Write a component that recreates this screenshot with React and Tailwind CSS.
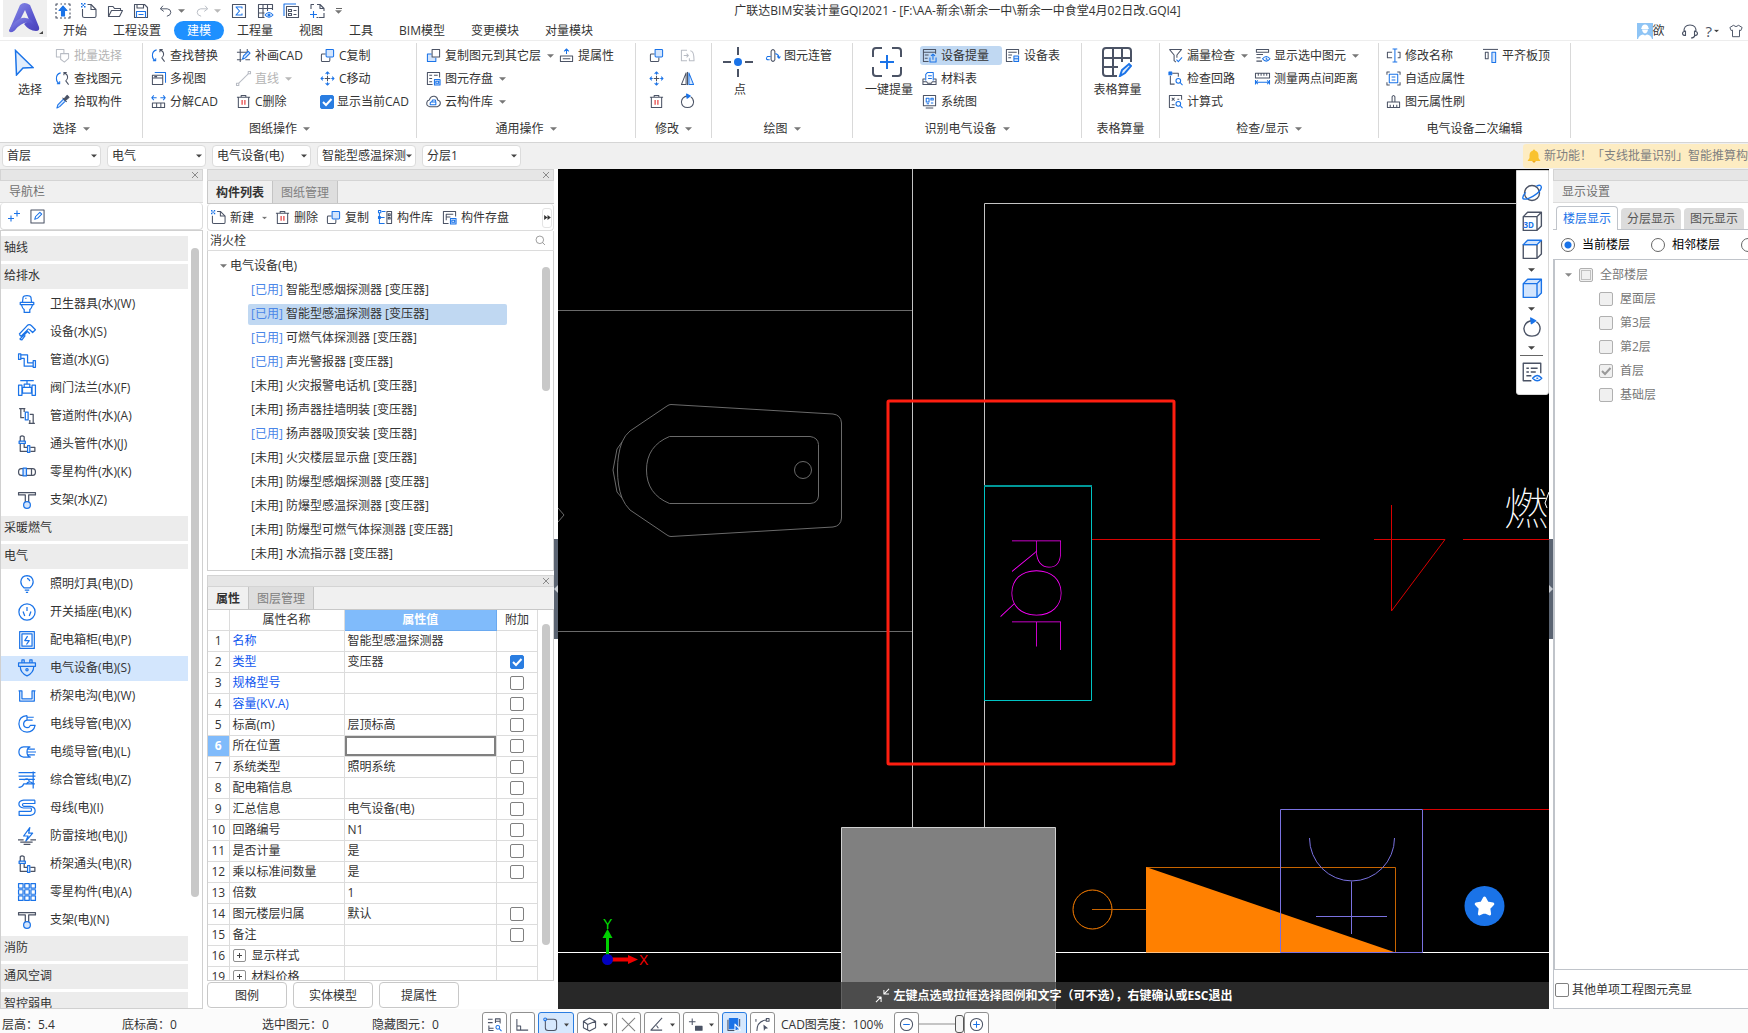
import React from "react";

const COLORS = {
  d: "#4b5365",
  b: "#1a73e8",
  r: "#e02020",
  g: "#b8bcc4",
  k: "#808080",
  n: "none",
  w: "#ffffff",
  l: "#d3e5fd",
};

// Each entry is a list of [path, stroke, fill].
const ICONS = {
  upload: [["M1 3V1H3M5.500 1H7M9 1h2M13 1h2v2M15 5.500v2M15 9.500v2M15 13v2h-2M11 15H9M7 15H5M3 15H1v-2M1 11V9M1 7V5", "d"], ["M8 3l4 4.500H9.500V13h-3V7.500H4z", "b", "b"]],
  newdoc: [["M6.500 1.500H10l5 5V13q0 1.500-1.500 1.500h-10Q1.500 14.500 1.500 13V6", "d"], ["M10 1.500V6.500h5", "d"], ["M0 0h1.500v1.500H0zM3 0h1.500v1.500H3zM1.500 1.500H3V3H1.500zM0 3h1.500v1.500H0zM3 3h1.500v1.500H3z", "n", "b"]],
  open: [["M1.500 13.500v-10h4.500l1.500 2h6v2", "d"], ["M1.500 13.500l3-6h11l-3 6z", "d"]],
  save: [["M1.500 1.500h10l3 3v10h-13z", "d"], ["M4 1.500v3.500h6.500V1.500", "d"], ["M3.500 14.500v-6h9v6M5.500 11.500h5", "b"]],
  undo: [["M4.500 2L1.500 5.500l4 3M2 5.500h7.500q4 .500 4 4t-4.500 4.500", "d"]],
  redo: [["M11.500 2l3 3.500-4 3M14 5.500H6.500q-4 .500-4 4t4.500 4.500", "g"]],
  sigma: [["M1.500 1.500h13v13h-13z", "d"], ["M11 5.500V4H5l3.500 4L5 12h6v-1.500", "b"]],
  tableeye: [["M15.500 7V1.500h-14v13h6M1.500 5.500h14M1.500 10h6M6 1.500v13M10.500 1.500V8", "d"], ["M8 12q4-5 8 0q-4 4.500-8 0z", "b"], ["M11 12a1 1 0 1 0 2 0a1 1 0 1 0-2 0", "b", "b"]],
  stack: [["M3.500 3.500h12v11h-12z", "d"], ["M13 1H1v12", "b"], ["M5.500 6.500h3v2h-3zM5.500 10.500h3v2h-3zM10.500 7.500h3M10.500 11.500h3", "d"]],
  adddoc: [["M2 6V1.500h3M8 1.500h3l4 4V8M15 10v4.500H10M7.500 14.500h2M11 1.500v4h4", "d"], ["M1 11.500h7M4.500 8v7", "b"]],
  batch: [["M1.500 1.500h8v8h-8z", "g"], ["M6 6V12l4 3 4.500-4V6z", "g", "w"]],
  find: [["M6 2Q1.500 3 1.500 8q0 4 3 5.500M2 13.500h3V11", "b"], ["M9 2q4 .500 4.500 4.500Q13.500 9 11.500 10.500l3 4M9.500 4.500V1.500h3", "d"]],
  picker: [["M2 15l1-3.500L9 5.500 11 7.500 5 13.500z", "b", "l"], ["M8 4l4.500 4.500M9.500 5.500l3.500-4 2 2-4 3.500z", "d", "d"]],
  windows: [["M1.500 4.500h11v10h-11z", "d"], ["M1.500 7.500h11M3.500 6h3", "d"], ["M4 1.500h11.500v11", "b"]],
  split: [["M1.500 9.500h4.500v5H1.500zM6 9.500h4.500v5H6zM10.500 9.500h4v5h-4z", "d"], ["M6 4H1M3 1.500L.800 4 3 6.500M10 4h5M13 1.500L15.200 4 13 6.500", "b"]],
  patch: [["M4.500 1v14M1 4.500h13M12 1v4M1 12.500h5M10 12.500h5", "d"], ["M7 12l1-3.500L13 3.500l2 2-5 5z", "b", "l"]],
  line: [["M3 13L13 3", "g"], ["M.500 13h2.500v2.500H.500zM13 .500h2.500V3H13z", "g"]],
  trash: [["M1 3.500h14M5.500 3.500V1.500h5v2M2.500 3.500v11h11v-11", "d"], ["M6.500 6.500v5M9.500 6.500v5", "r"]],
  copy: [["M6 6.500H2.500q-1 0-1 1V13q0 1.500 1 1.500H9q1.500 0 1.500-1.500v-3", "d"], ["M6.500 1.500h7q1 0 1 1v6q0 1-1 1h-6q-1 0-1-1z", "b", "l"]],
  copyto: [["M6 6.500H1.500v8h9v-4", "b", "l"], ["M6.500 1.500h8v8h-8z", "d", "w"]],
  move: [["M8 5v6M5 8h6", "d"], ["M8 4V1M6 3l2-2 2 2M8 12v3M6 13l2 2 2-2M4 8H1M3 6L1 8l2 2M12 8h3M13 6l2 2-2 2", "b"]],
  upattr: [["M1.500 8.500h13v6h-13zM4 11.500h8", "d"], ["M8 6.500V1M5.500 3.500L8 1l2.500 2.500", "b"]],
  disk: [["M7 14.500H1.500v-13h13V7M3.500 4.500h3M3.500 8h3M3.500 11.500h3M8.500 4.500h4", "d"], ["M9 9h6v6H9zM10.500 11v2h3v-2z", "b", "l"]],
  cloud: [["M4 13.500Q.500 13 .800 9.500 1 7 3.500 6.500 5 2 9 2.500q3 .500 3.500 4Q15.500 7.500 15.300 10t-3.300 3.500z", "d"], ["M5.500 8.500h5v3h-6v-2zM6 8.500l1-2h3l.500 2", "b"]],
  mirrorcopy: [["M7.500 2.500H1.500v11h6M4 8h5M7 6l2 2-2 2", "g"], ["M11 3q4 0 4 10.500h-5V11", "g"]],
  mirror: [["M6.500 2v12.500h-5z", "d"], ["M9.500 2v12.500h5z", "b", "l"], ["M8 1v14", "d"]],
  rotate: [["M11.500 3Q14.500 5 14.500 8.500q-.500 6-6.500 6t-6.500-6Q2 3 8 2", "d"], ["M7 0l4 2.200L7.500 4.500z", "b", "b"]],
  pipe: [["M6.500 3.500Q8.500-.500 10.500 3.500v9Q8.500 16 6.500 12.500z", "d"], ["M6 9H2.500Q-.500 13 5 12.500M11 6q4 1 4 5M13 9l2 2 1.500-2", "b"]],
  devup: [["M7 14.500H1.500v-13h13V6M1.500 4.500h13M3 7.500h4M3 11h3", "d"], ["M8.500 10v5h6.500v-5M11.700 12.500V6.500M9.500 8.500l2.200-2 2.200 2", "b"]],
  mat: [["M3.500 8.500H1v6h14v-6h-2.500M1 11.500h4l1 1.500h4l1-1.500h4", "d"], ["M4 10V3.500l2-2h6V10M6.500 5h4M6.500 8h4", "b"]],
  sys: [["M1.500 1.500h13v11h-13zM4 15h8", "d"], ["M4.500 4.500h3v4h-3zM9.500 4.500h2.500v2H9.500zM9.500 9.500h2.500M5 10.500h2.500", "b"]],
  devtable: [["M8 14.500H1.500v-13h13V7M3.500 4.500h9M3.500 7.500h4M3.500 10.500h3", "d"], ["M9.500 8.500h5v6h-5zM9.500 11.500h5", "b", "l"]],
  filter: [["M1.500 1.500h13l-5 6v3M1.500 1.500l5 6v6l2 1.500", "d"], ["M9 12.500l2 2 4-4.500", "b"]],
  loop: [["M4.500 2.500H11V6M2.500 5v9H7", "d"], ["M1 1h3v3H1z", "b", "b"], ["M8.500 10.500a2.500 2.500 0 1 0 5 0a2.500 2.500 0 1 0-5 0M13 12.500l2.500 2.500", "b"]],
  formula: [["M7 14.500H1.500v-13h13V6M4 4l3 3M7 4L4 7M4 11.500h3M10 5.500h2", "d"], ["M8.500 10.500a2.500 2.500 0 1 0 5 0a2.500 2.500 0 1 0-5 0M13 12.500l2.500 2.500", "b"]],
  showsel: [["M1.500 1.500h13v3h-13zM1.500 7h7M1.500 10.500H6M1.500 14h6", "d"], ["M8 11.500q4-5 8 0q-4 5-8 0z", "b"], ["M12 10v2h1.500", "b"]],
  ruler: [["M.500 2.500h15v5H.500zM3.500 2.500v2.500M6.500 2.500v2.500M9.500 2.500v2.500M12.500 2.500v2.500", "d"], ["M1 12h14M3 10l-2 2 2 2M13 10l2 2-2 2M.500 9.500v5M15.500 9.500v5", "b"]],
  rename: [["M6.500 4.500h-5v6h5M12.500 4.500H15v6h-2.500", "d"], ["M9.500 1v14M7 1h5M7 15h5", "b"]],
  adapt: [["M1 4V1h3M12 1h3v3M15 12v3h-3M4 15H1v-3", "d"], ["M3.500 3.500h9v9h-9zM6 6.500h4M6 9.500h4", "b"]],
  brush: [["M1.500 14.500v-6h5V3q1.500-3 3 0v5.500h5v6zM4.500 14v-2.500M8 14v-2.500M11.500 14v-2.500M1.500 8.500h13", "d"]],
  align: [["M0 1.500h16", "d"], ["M2.500 4.500h3v7h-3z", "d"], ["M9.500 4.500h4v11h-4z", "b", "l"]],
  pencil: [["M1 1h14v14H1z", "d"], ["M5 11l1-3L10.500 3.500l2 2L8 10z", "b"]],
  plusplus: [["M0 10.500h6M3 7.500v6M6 5.500h6M9 2.500v6", "b"]],
  lib: [["M9.500 1.500h5v13h-5zM11 4h2v2h-2zM11 8h2v1.500h-2z", "d"], ["M.500 .500h2.500v2.500H.500zM4 1.500h4M1.500 3v12M1.500 8H7M1.500 14.500H7M.500 7h2v2h-2z", "b"]],
  stash: [["M7 14.500H1.500v-13h13V7M4.500 11V4.500h7.500M4.500 7.500H9", "d"], ["M9 9h6v6H9zM10.500 11v2h3v-2z", "b", "l"]],
  search: [["M1.500 7a5.500 5.500 0 1 0 11 0a5.500 5.500 0 1 0-11 0M11 11l3.500 3.500", "k"]],
  headset: [["M2 9Q1.500 2 8 2t6 7M3.500 8v4.500Q.500 12.500.500 10.500T3.500 8zM12.500 8v4.500q3 0 3-2T12.500 8zM13 12.500q-1 2.500-4 2.500", "d"]],
  shirt: [["M5 1.500L1 4l1.500 3.500 1.500-.500V14.500h8V7l1.500.500L15 4 11 1.500Q8 4.500 5 1.500z", "d"]],
  orbit: [["M2 8a6 6 0 1 0 12 0a6 6 0 1 0-12 0", "d"], ["M11.500 2.500Q15.500.800 15.500 3.500 15 7 9 10.500T.800 12.500Q0 10.500 3 7.500", "b"]],
  cube3d: [["M1 4.500h11v11H1zM1 4.500L4.500 1H15.500L12 4.500M15.500 1v11L12 15.500", "d"]],
  cube: [["M1 4.500h11v11H1zM15.500 1v11L12 15.500", "d"], ["M1 4.500L4.500 1H15.500L12 4.500z", "b", "l"]],
  cubeblue: [["M1 4.500L4.500 1H15.500v11L12 15.500H1z", "b", "l"], ["M1 4.500h11v11M12 4.500L15.500 1", "b"]],
  listeye: [["M7.500 15H1V1h14v8M3.500 5h2M7 5h5.500M3.500 8h2M7 8h4M3.500 11h4", "d"], ["M8.500 13q3.700-4.500 7.300 0q-3.600 4-7.300 0z", "b"], ["M11.500 13h1.500", "b"]],
  sFind: [["M1 2.500h5M1 6h5M2 9v5.500h5M2 12h5M9 6.500V2h5v5M9 4.500h5", "d"], ["M9.500 11a2 2 0 1 0 4 0a2 2 0 1 0-4 0M13 12.500l2.500 2.500", "b"]],
  sCorner: [["M2 2v12h12M2 9.500h4V14", "d"]],
  sRect: [["M3 2.500h8.500q3 0 3 3v6q0 3-3 3h-6q-3 0-3-3V4", "d"], ["M.800 2.500a1.500 1.500 0 1 0 3 0a1.500 1.500 0 1 0-3 0", "b"]],
  sCube: [["M8 1l6.500 3.500v7L8 15l-6.500-3.500v-7zM1.500 4.500L6 8l8.500-3.500M6 8v6", "d"]],
  sX: [["M1 1l14 14M15 1L1 15", "k"]],
  sAngle: [["M14 1L2 14h12M8 9l2 3", "d"]],
  sPlus: [["M1 5h7M4.500 1.500v7", "d"], ["M8 10h7v4H8z", "d", "d"]],
  sSel: [["M2.500 1.500h9v11h-9z", "b", "b"], ["M1 3v11.500h10M13.500 2v8", "d"], ["M8.500 7.500l6 6.500-3.500 0-2.500 1.500z", "w", "b"]],
  sCurve: [["M2 15Q2 4 13 3M1 2v3M12 1.500h3v3h-3z", "d"], ["M9 8l5 4-3 .500L9.500 15z", "n", "d"]],
  minus: [["M1.500 8a6.500 6.500 0 1 0 13 0a6.500 6.500 0 1 0-13 0", "d"], ["M4.500 8h7", "b"]],
  plus: [["M1.500 8a6.500 6.500 0 1 0 13 0a6.500 6.500 0 1 0-13 0", "d"], ["M4.500 8h7M8 4.500v7", "b"]],
  shrink: [["M15 1L9.500 6.500M9.500 2v4.500H15M1 15l5.500-5.500M2 9.500h4.500V15", "w"]],
  toilet: [["M4 6L4.500 2Q5 .500 8 .500T11.500 2L12 6M2 6.500h12v2H2zM3 8.500Q4 12 5.500 13v2.500h5V13Q12 12 13 8.500M6.500 3h1", "b"]],
  pump: [["M1 10L8 2.500Q10 .500 12 2.500L15.500 6 13 8.500 10 5.500M3 11.500L9.500 5M1.500 14.500L8.500 7.500 10.500 9.500M1 10l2 2M1.500 14.500l2 .500 3-4", "b"]],
  tube: [["M2.500 3.500h6v7h5M2.500 6.500H5.500v7h8M.500 2.500h2v5h-2zM13.500 8.500h2v6h-2z", "b"]],
  valve: [["M2 1.500h12M8 1.500V4M5.500 4.500h5v3h-5zM4 7.500h8v5H4zM.500 5.500h3v9h-3zM12.500 5.500h3v9h-3z", "b"]],
  fitting: [["M1 1.500h5.500M2.500 1.500v8h3M5.500 1.500v3M15 14.500H9.500M13.500 14.500v-8h-3M10.500 14.500v-3", "d"], ["M6.500 4.500h2.500v7H6.500z", "b"]],
  elbow: [["M2 5.500V1.500q1.500-1.500 3.500 0v4M2 7.500v7h6.500M5.500 7.500V11h3M11 11h4v3.500h-4", "d"], ["M1 5.500h5.500v2H1zM8.500 9.500h2V15.500h-2z", "b"]],
  capsule: [["M3 5h10q2.500 0 2.500 3T13 11H3Q.500 11 .500 8T3 5zM12 5v6", "d"], ["M4.500 4.500h3v7h-3z", "b", "l"]],
  hanger: [["M.500 1.500h15v2H9.500V10h-3V3.500h-6z", "d"], ["M5 12.500a3 3 0 1 0 6 0a3 3 0 1 0-6 0", "b", "l"]],
  bulb: [["M5.500 11.500Q2.500 9 2.500 6 3 .800 8 .500q5 .300 5.500 5.500 0 3-3 5.500zM6 13.500h4M7 15.500h2M8 3q2 .300 2.500 2.500", "b"]],
  socket: [["M.800 8a7.200 7.200 0 1 0 14.400 0a7.200 7.200 0 1 0-14.400 0M8 3.500V7M4.500 7.500l1.500 4M11.500 7.500l-1.500 4", "b"]],
  panel: [["M1.500.500h13v15h-13zM3.500 2.500h9v11h-9zM8.500 4.500L6 8.500h4L7.500 12", "b"]],
  device: [["M.500 3.500h15v3H.500zM3.500 3.500V.800h2v2.700M10.500 3.500V.800h2v2.700M2 6.500q0 6 6 8.500 6-2.500 6-8.500M7 9.500a1 1 0 1 0 2 0a1 1 0 1 0-2 0", "b"]],
  trough: [["M.500 3.500h3v7h9v-7h3M1.500 4v8.500h13V4", "b"]],
  conduit: [["M8 .500Q.800 1 .800 8 1.500 15 8 15.200q6-.200 7.200-6H11q-.700 2-3 2Q5 10.800 5 8t3-3.500M8 .500v4M8 2h6M8 4.500h5", "b"]],
  cable: [["M11 3.500H5Q.800 4 .800 8T5 12.500h6Q8 12 8 8t3-4.500M9 5.500h6M8.500 8h7.500M9 10.500h6", "b"]],
  bundle: [["M.500 1.500h15M.500 4.500h15M1 7.500h14M.500 14.500Q4 14.500 5 11.500h10M13.500.500v15M5 8q4-2.500 5 1M7 12q3-4 6-1", "b"]],
  bus: [["M15 1H5Q.800 1.500.800 4.500T5 8h6q1 0 1 1.500T11 11H1v3.500h10q4.200-.500 4.200-4T11 6.500H5Q4 6 4 5t1-1h10V1", "b"]],
  bolt: [["M10.500.500L5 8h4l-2 4.500L13 5.500H9.500z", "b"], ["M0 11.500h5M11 11.500h5M2 13.500h11M5 15.500h6", "d"]],
  grid: [["M.500.500h4v4h-4zM6 .500h4v4H6zM11.500.500h4v4h-4zM.500 6h4v4h-4zM6 6h4v4H6zM11.500 6h4v4h-4zM.500 11.500h4v4h-4zM6 11.500h4v4H6zM11.500 11.500h4v4h-4z", "b"]],
};

function Icon({ name, className = "size-[15px]" }) {
  return (
    <svg viewBox="0 0 16 16" className={"shrink-0 overflow-visible " + className} strokeWidth="1.1" strokeLinejoin="round" aria-hidden="true">
      {ICONS[name].map(([d, s, f], i) => (
        <path key={i} d={d} stroke={COLORS[s]} fill={COLORS[f || "n"]} />
      ))}
    </svg>
  );
}

function Caret({ className = "text-[#777]" }) {
  return (
    <svg viewBox="0 0 8 4" className={"h-1 w-[7px] shrink-0 " + className} aria-hidden="true">
      <path d="M0 0h8L4 4z" fill="currentColor" />
    </svg>
  );
}

function Check({ label, checked, disabled, partial }) {
  return (
    <span className="relative inline-flex size-[14px] shrink-0">
      <input
        type="checkbox"
        aria-label={label}
        defaultChecked={checked}
        disabled={disabled}
        className="size-[14px] appearance-none rounded-[2px] border border-[#808080] bg-white checked:border-[#2a7de1] checked:bg-[#2a7de1] disabled:border-[#b0b0b0] disabled:bg-[#f0f0f0]"
      />
      {checked && (
        <svg viewBox="0 0 14 14" className={"pointer-events-none absolute inset-0 " + (disabled ? "text-[#999]" : "text-white")}>
          <path d="M3 7l3 3 5.500-6" fill="none" stroke="currentColor" strokeWidth="2" />
        </svg>
      )}
      {partial && <span className="pointer-events-none absolute inset-[2px] border border-[#c0c0c0]" />}
    </span>
  );
}

function Tool({ icon, text, caret, muted }) {
  return (
    <button
      type="button"
      className={"flex h-[23px] items-center gap-1 whitespace-nowrap " + (muted ? "text-[#b4b4b4]" : "")}
    >
      <Icon name={icon} />
      {text}
      {caret && <Caret className={muted ? "ml-[2px] text-[#b8b8b8]" : "ml-[2px] text-[#777]"} />}
    </button>
  );
}

function Group({ label, caret, width, pad = "", children }) {
  return (
    <>
      <section className={"flex shrink-0 flex-col pt-[3px] " + width}>
        <div className={"flex h-[69px] shrink-0 items-start " + pad}>{children}</div>
        <div className="flex flex-1 items-center justify-center gap-[6px] pt-[2px]">
          {label}
          {caret && <Caret />}
        </div>
      </section>
      <div className="mt-[2px] h-[95px] w-px shrink-0 bg-[#d9d9d9]" />
    </>
  );
}

function Header() {
  const tabs = ["开始", "工程设置", "建模", "工程量", "视图", "工具", "BIM模型", "变更模块", "对量模块"];
  return (
    <header className="flex h-[41px] shrink-0 border-b border-[#ededed] bg-white pl-[3px]">
      <div className="h-[37px] w-[44px] shrink-0 bg-[#efefef]">
        <svg viewBox="0 0 44 37" className="h-full w-full">
          <defs>
            <linearGradient id="logo" x1="0" y1="0" x2="1" y2="1">
              <stop offset="0" stopColor="#8f93ea" />
              <stop offset="0.600" stopColor="#5a56cf" />
              <stop offset="1" stopColor="#4a41b8" />
            </linearGradient>
          </defs>
          <path d="M17 5Q21 1 27 5L36 27Q37 31 33 31 26 31 21 24 24 21 27 22L22 10 12 30Q9 33 6 31L8 26Z" fill="url(#logo)" />
          <path d="M12 22Q21 14 29 21L31 25Q22 18 12 30 8 34 6 31 7 27 12 22z" fill="url(#logo)" />
          <path d="M40 34h-4l4-3z" fill="#444" />
        </svg>
      </div>
      <div className="flex min-w-0 flex-1 flex-col">
        <div className="flex h-[21px] shrink-0 items-center">
          <div className="flex shrink-0 items-center gap-[10px] pl-2">
            {["upload", "newdoc", "open", "save"].map((n) => (
              <button key={n} type="button" aria-label={n}><Icon name={n} className="size-4" /></button>
            ))}
            <button type="button" aria-label="撤销" className="flex items-center gap-[5px]">
              <Icon name="undo" className="size-[14px]" /><Caret />
            </button>
            <button type="button" aria-label="恢复" className="flex items-center gap-[5px]">
              <Icon name="redo" className="size-[14px]" /><Caret className="text-[#b8b8b8]" />
            </button>
            {["sigma", "tableeye", "stack", "adddoc"].map((n) => (
              <button key={n} type="button" aria-label={n}><Icon name={n} className="size-4" /></button>
            ))}
            <button type="button" aria-label="自定义" className="flex flex-col items-center gap-px">
              <span className="h-px w-[6px] bg-[#666]" /><Caret />
            </button>
          </div>
          <h1 className="min-w-0 flex-1 truncate text-center text-[12px] leading-5 font-normal">
            广联达BIM安装计量GQI2021 - [F:\AA-新余\新余一中\新余一中食堂4月02日改.GQI4]
          </h1>
          <div className="w-[175px] shrink-0" />
        </div>
        <nav className="flex min-h-0 flex-1 items-center pl-[3px]">
          {tabs.map((t) => (
            <a key={t} href="#" className={"rounded-full px-[13px] leading-[19px] whitespace-nowrap " + (t === "建模" ? "bg-[#1e90ff] text-white" : "")}>
              {t}
            </a>
          ))}
          <div className="ml-auto flex items-center pr-[5px]">
            <svg viewBox="0 0 16 16" className="size-4" aria-hidden="true">
              <path d="M0 0h16v16H0z" fill="#8ec4f5" />
              <path d="M4.500 5Q5 1.500 8 1.500T11.500 5l.5 1h-8zM5 6.500h6Q10.500 10 8 10.500 5.500 10 5 6.500zM1 16q1-4 5-4.500l2 1 2-1q4 .500 5 4.500z" fill="#fff" />
            </svg>
            <span>欲</span>
            <button type="button" aria-label="客服" className="ml-[17px]"><Icon name="headset" className="size-4" /></button>
            <button type="button" aria-label="帮助" className="ml-2 flex items-center gap-px text-[15px] leading-4 text-[#4b5365]">
              ?<Caret className="scale-75 text-[#444]" />
            </button>
            <button type="button" aria-label="皮肤" className="ml-[9px]"><Icon name="shirt" className="size-[14px]" /></button>
          </div>
        </nav>
      </div>
    </header>
  );
}

function Ribbon() {
  return (
    <div className="flex h-[102px] shrink-0 overflow-hidden border-b border-[#d5d5d5] bg-white">
      <Group label="选择" caret width="w-[142px]">
        <button type="button" className="flex w-[55px] flex-col items-start pl-[14px]">
          <svg viewBox="0 0 20 27" className="mt-[5px] h-[27px] w-5">
            <path d="M1.500 1.500L19 18.500l-10 .500-6.500 7z" fill="#e3eefc" stroke="#1a73e8" strokeWidth="1.500" />
          </svg>
          <span className="mt-[6px] ml-1">选择</span>
        </button>
        <div>
          <Tool icon="batch" text="批量选择" muted />
          <Tool icon="find" text="查找图元" />
          <Tool icon="picker" text="拾取构件" />
        </div>
      </Group>
      <Group label="图纸操作" caret width="w-[273px]" pad="pl-2">
        <div className="w-[85px]">
          <Tool icon="find" text="查找替换" />
          <Tool icon="windows" text="多视图" />
          <Tool icon="split" text="分解CAD" />
        </div>
        <div className="w-[84px]">
          <Tool icon="patch" text="补画CAD" />
          <Tool icon="line" text="直线" muted caret />
          <Tool icon="trash" text="C删除" />
        </div>
        <div>
          <Tool icon="copy" text="C复制" />
          <Tool icon="move" text="C移动" />
          <label className="flex h-[23px] items-center gap-[3px] whitespace-nowrap">
            <Check checked />显示当前CAD
          </label>
        </div>
      </Group>
      <Group label="通用操作" caret width="w-[218px]" pad="pl-[9px]">
        <div className="w-[133px]">
          <Tool icon="copyto" text="复制图元到其它层" caret />
          <Tool icon="disk" text="图元存盘" caret />
          <Tool icon="cloud" text="云构件库" caret />
        </div>
        <Tool icon="upattr" text="提属性" />
      </Group>
      <Group label="修改" caret width="w-[75px]" pad="pl-[13px]">
        <div className="grid grid-cols-2">
          {["copy", "mirrorcopy", "move", "mirror", "trash", "rotate"].map((n) => (
            <button key={n} type="button" aria-label={n} className="flex h-[23px] w-8 items-center"><Icon name={n} /></button>
          ))}
        </div>
      </Group>
      <Group label="绘图" caret width="w-[140px]" pad="pl-[11px]">
        <button type="button" className="flex flex-col items-center">
          <svg viewBox="0 0 30 30" className="mt-[3px] size-[30px]">
            <path d="M15 0v8M15 22v8M0 15h8M22 15h8" stroke="#4b5365" strokeWidth="2" />
            <circle cx="15" cy="15" r="4" fill="#1a73e8" />
          </svg>
          <span className="mt-[5px] pl-1">点</span>
        </button>
        <div className="pl-3"><Tool icon="pipe" text="图元连管" /></div>
      </Group>
      <Group label="识别电气设备" caret width="w-[228px]" pad="pl-3">
        <button type="button" className="flex flex-col items-center whitespace-nowrap">
          <svg viewBox="0 0 30 30" className="mt-[3px] mr-1 size-[30px]" fill="none" strokeWidth="2">
            <path d="M1 10V4q0-3 3-3h6M20 1h6q3 0 3 3v6M29 20v6q0 3-3 3h-6M10 29H4q-3 0-3-3v-6" stroke="#4b5365" />
            <path d="M8 15h14M15 8v14" stroke="#1a73e8" />
          </svg>
          <span className="mt-[5px]">一键提量</span>
        </button>
        <div className="pl-[7px]">
          <div className="flex h-[23px] w-[82px] items-center">
            <div className="flex h-[19px] w-full items-center rounded-[3px] bg-[#c0d8f2] pl-[2px]">
              <Tool icon="devup" text="设备提量" />
            </div>
          </div>
          <div className="pl-[2px]">
            <Tool icon="mat" text="材料表" />
            <Tool icon="sys" text="系统图" />
          </div>
        </div>
        <div className="pl-[3px]"><Tool icon="devtable" text="设备表" /></div>
      </Group>
      <Group label="表格算量" width="w-[77px]">
        <button type="button" className="flex w-full flex-col items-center pr-[6px]">
          <svg viewBox="0 0 30 30" className="mt-[3px] mr-[2px] size-[30px]" fill="none" strokeWidth="2">
            <path d="M15 29H4q-3 0-3-3V4q0-3 3-3h22q3 0 3 3v11M1 11h28M1 20h15M11 1v28M20 1v14" stroke="#4b5365" />
            <path d="M18 29l2-6 7-6 2 2-6 7z" stroke="#1a73e8" fill="#e3eefc" />
          </svg>
          <span className="mt-[5px]">表格算量</span>
        </button>
      </Group>
      <Group label="检查/显示" caret width="w-[218px]" pad="pl-2">
        <div className="w-[87px]">
          <Tool icon="filter" text="漏量检查" caret />
          <Tool icon="loop" text="检查回路" />
          <Tool icon="formula" text="计算式" />
        </div>
        <div>
          <Tool icon="showsel" text="显示选中图元" caret />
          <Tool icon="ruler" text="测量两点间距离" />
        </div>
      </Group>
      <Group label="电气设备二次编辑" width="w-[191px]" pad="pl-[7px]">
        <div className="w-[97px]">
          <Tool icon="rename" text="修改名称" />
          <Tool icon="adapt" text="自适应属性" />
          <Tool icon="brush" text="图元属性刷" />
        </div>
        <Tool icon="align" text="平齐板顶" />
      </Group>
    </div>
  );
}

function FilterBar() {
  return (
    <div className="flex h-[26px] shrink-0 items-center overflow-hidden bg-[#f0f0f0] pl-[2px]">
      <div className="flex gap-[6px]">
        {["首层", "电气", "电气设备(电)", "智能型感温探测", "分层1"].map((v) => (
          <span key={v} className="relative flex w-[99px] items-center">
            <select aria-label={v} className="h-[22px] w-full appearance-none rounded-[4px] border border-[#dcdcdc] bg-white pr-[8px] pl-1 text-[12px]">
              <option>{v}</option>
            </select>
            <svg viewBox="0 0 8 4" className="pointer-events-none absolute right-1 h-1 w-[6px] text-[#444]"><path d="M0 0h8L4 4z" fill="currentColor" /></svg>
          </span>
        ))}
      </div>
      <div className="ml-auto flex h-6 w-[225px] shrink-0 items-center overflow-hidden rounded-l-[3px] bg-[#fdecc2] pl-1 whitespace-nowrap text-[#808080]">
        <svg viewBox="0 0 14 14" className="mr-[3px] size-[14px] shrink-0">
          <path d="M7 .500q1 0 1 1 3.500 1 3.500 5V9l2 3H.500l2-3V6.500q0-4 3.500-5 0-1 1-1z" fill="#f9c22e" />
          <path d="M5 12h4l-2 2z" fill="#f0a81c" />
        </svg>
        新功能！「支线批量识别」智能推算构
      </div>
    </div>
  );
}

function PanelStrip() {
  return (
    <div className="flex h-3 shrink-0 items-center justify-end border border-[#d4d4d4] bg-[#e6e6e6] pr-1">
      <button type="button" aria-label="关闭">
        <svg viewBox="0 0 8 8" className="size-[6px]"><path d="M0 0l8 8M8 0L0 8" stroke="#888" strokeWidth="1.300" /></svg>
      </button>
    </div>
  );
}

const NAV = [
  ["轴线"],
  ["给排水"],
  ["卫生器具(水)(W)", "toilet"],
  ["设备(水)(S)", "pump"],
  ["管道(水)(G)", "tube"],
  ["阀门法兰(水)(F)", "valve"],
  ["管道附件(水)(A)", "fitting"],
  ["通头管件(水)(J)", "elbow"],
  ["零星构件(水)(K)", "capsule"],
  ["支架(水)(Z)", "hanger"],
  ["采暖燃气"],
  ["电气"],
  ["照明灯具(电)(D)", "bulb"],
  ["开关插座(电)(K)", "socket"],
  ["配电箱柜(电)(P)", "panel"],
  ["电气设备(电)(S)", "device"],
  ["桥架电沟(电)(W)", "trough"],
  ["电线导管(电)(X)", "conduit"],
  ["电缆导管(电)(L)", "cable"],
  ["综合管线(电)(Z)", "bundle"],
  ["母线(电)(I)", "bus"],
  ["防雷接地(电)(J)", "bolt"],
  ["桥架通头(电)(R)", "elbow"],
  ["零星构件(电)(A)", "grid"],
  ["支架(电)(N)", "hanger"],
  ["消防"],
  ["通风空调"],
  ["智控弱电"],
];

function NavPanel() {
  return (
    <aside className="flex w-[203px] shrink-0 flex-col">
      <PanelStrip />
      <div className="h-[22px] shrink-0 border-b border-[#dcdcdc] bg-[#f0f0f0] pl-[9px] leading-[22px] text-[#707070]">导航栏</div>
      <div className="flex h-[27px] shrink-0 items-center gap-[6px] rounded-[4px] border border-t-0 border-[#dcdcdc] bg-white pl-[7px]">
        <button type="button" aria-label="新增"><Icon name="plusplus" className="size-4" /></button>
        <button type="button" aria-label="编辑"><Icon name="pencil" /></button>
      </div>
      <div className="flex min-h-0 flex-1 border border-[#d0d0d0] bg-white pt-[3px]">
        <ul className="min-w-0 flex-1 overflow-hidden">
          {NAV.map(([text, icon]) => (
            <li key={text} className="flex h-7 items-center">
              <button
                type="button"
                className={
                  "flex h-[25px] w-full items-center text-left whitespace-nowrap " +
                  (icon ? (text === "电气设备(电)(S)" ? "gap-[14px] bg-[#d3e6fd] pl-[17px]" : "gap-[14px] pl-[17px]") : "bg-[#ececec] pl-[3px]")
                }
              >
                {icon && <Icon name={icon} className="size-[18px]" />}
                {text}
              </button>
            </li>
          ))}
        </ul>
        <div className="flex w-[14px] shrink-0 justify-center pt-[14px] pb-[111px]">
          <div className="w-2 rounded-full bg-[#c8c8c8]" />
        </div>
      </div>
    </aside>
  );
}

function Tabs({ items }) {
  return (
    <div className="flex h-[23px] shrink-0 border-b border-l border-[#c8c8c8] bg-[#f0f0f0]" role="tablist">
      {items.map((t, i) => (
        <button
          key={t}
          type="button"
          role="tab"
          className={
            "border-r border-[#c4c4c4] px-2 pt-[2px] whitespace-nowrap " +
            (i === 0 ? "bg-[#f0f0f0] font-bold" : "bg-[#dedede] text-[#808080]")
          }
        >
          {t}
        </button>
      ))}
    </div>
  );
}

const COMPONENTS = [
  [1, "智能型感烟探测器"],
  [1, "智能型感温探测器"],
  [1, "可燃气体探测器"],
  [1, "声光警报器"],
  [0, "火灾报警电话机"],
  [0, "扬声器挂墙明装"],
  [1, "扬声器吸顶安装"],
  [0, "火灾楼层显示盘"],
  [0, "防爆型感烟探测器"],
  [0, "防爆型感温探测器"],
  [0, "防爆型可燃气体探测器"],
  [0, "水流指示器"],
];

function ComponentPanel() {
  return (
    <section className="flex shrink-0 flex-col">
      <PanelStrip />
      <Tabs items={["构件列表", "图纸管理"]} />
      <div className="flex h-[27px] shrink-0 items-center rounded-[4px] border border-t-0 border-[#dcdcdc] bg-white pt-px pl-[3px] whitespace-nowrap">
        <button type="button" className="flex w-[64px] items-center gap-1"><Icon name="newdoc" />新建<Caret className="ml-[3px] scale-75 text-[#777]" /></button>
        <button type="button" className="flex w-[51px] items-center gap-1"><Icon name="trash" />删除</button>
        <button type="button" className="flex w-[52px] items-center gap-1"><Icon name="copy" />复制</button>
        <button type="button" className="flex w-[64px] items-center gap-1"><Icon name="lib" />构件库</button>
        <button type="button" className="flex items-center gap-1"><Icon name="stash" />构件存盘</button>
        <button type="button" aria-label="更多" className="mr-px ml-auto flex h-5 w-[10px] items-center justify-center rounded-[3px] border border-[#e4e4e4]">
          <svg viewBox="0 0 8 6" className="h-[5px] w-[7px] shrink-0"><path d="M0 0l4 3-4 3zM4 0l4 3-4 3z" fill="#333" /></svg>
        </button>
      </div>
      <div className="flex h-5 shrink-0 items-center border-x border-b border-[#dcdcdc] bg-white pr-[7px] pl-[2px]">
        <input aria-label="搜索构件" defaultValue="消火栓" className="min-w-0 flex-1 bg-transparent pt-px text-[12px] leading-4 outline-none" />
        <Icon name="search" className="size-[11px]" />
      </div>
      <div className="flex border border-t-0 border-[#d0d0d0] bg-white pt-[3px] pb-1">
        <ul className="min-w-0 flex-1">
          <li className="flex h-6 items-center gap-[3px] pl-3"><Caret />电气设备(电)</li>
          {COMPONENTS.map(([used, name], i) => (
            <li key={name} className="flex h-6 items-center pr-[35px] pl-10">
              <div className={"flex h-[21px] w-full items-center rounded-[2px] pl-[3px] whitespace-pre " + (i === 1 ? "bg-[#c0d8f2]" : "")}>
                <span className={used ? "text-[#4a86e8]" : ""}>{used ? "[已用] " : "[未用] "}</span>
                {name} [变压器]
              </div>
            </li>
          ))}
        </ul>
        <div className="flex w-[11px] shrink-0 flex-col pt-[13px]">
          <div className="h-[124px] w-2 rounded-full bg-[#c8c8c8]" />
        </div>
      </div>
    </section>
  );
}

// [row number, name, value, extra-column state]
const PROPS = [
  [1, "名称", "智能型感温探测器", null],
  [2, "类型", "变压器", true],
  [3, "规格型号", "", false],
  [4, "容量(KV.A)", "", false],
  [5, "标高(m)", "层顶标高", false],
  [6, "所在位置", "", false],
  [7, "系统类型", "照明系统", false],
  [8, "配电箱信息", "", false],
  [9, "汇总信息", "电气设备(电)", false],
  [10, "回路编号", "N1", false],
  [11, "是否计量", "是", false],
  [12, "乘以标准间数量", "是", false],
  [13, "倍数", "1", null],
  [14, "图元楼层归属", "默认", false],
  [15, "备注", "", false],
  [16, "显示样式", "", null],
  [19, "材料价格", "", null],
];

function PropertyPanel() {
  return (
    <section className="mt-1 flex min-h-0 flex-1 flex-col">
      <PanelStrip />
      <Tabs items={["属性", "图层管理"]} />
      <div className="flex min-h-0 flex-1 overflow-hidden border border-t-0 border-[#d0d0d0] bg-white">
        <table className="w-full flex-1 table-fixed border-collapse self-start">
          <colgroup>
            <col className="w-[21px]" />
            <col className="w-[115px]" />
            <col />
            <col className="w-[41px]" />
          </colgroup>
          <thead>
            <tr className="h-5">
              <th className="border-r border-b border-[#dcdcdc] p-0" />
              <th className="border-r border-b border-[#dcdcdc] p-0 font-normal">属性名称</th>
              <th className="border-r border-b border-[#6aa9f0] bg-[#80bbfb] p-0 font-bold text-white">属性值</th>
              <th className="border-r border-b border-[#dcdcdc] p-0 font-normal">附加</th>
            </tr>
          </thead>
          <tbody>
            {PROPS.map(([n, name, value, extra]) => (
              <tr key={n} className="h-[21px]">
                <td className={"border-r border-b border-[#dcdcdc] p-0 text-center " + (n === 6 ? "bg-[#80bbfb] font-bold text-white" : "")}>{n}</td>
                <td className="border-r border-b border-[#dcdcdc] p-0 pl-[3px] whitespace-nowrap">
                  {n > 15 ? (
                    <span className="flex items-center gap-[6px]">
                      <button type="button" aria-label={"展开" + name} className="flex size-[13px] items-center justify-center rounded-[2px] border border-[#909090]">
                        <svg viewBox="0 0 5 5" className="size-[5px]"><path d="M0 2.500h5M2.500 0v5" stroke="#444" /></svg>
                      </button>
                      {name}
                    </span>
                  ) : (
                    <span className={n < 5 ? "text-[#1058f0]" : ""}>{name}</span>
                  )}
                </td>
                <td className="border-r border-b border-[#dcdcdc] p-0">
                  {n === 6 ? (
                    <input aria-label={name} className="block h-5 w-full border-2 border-[#808080] bg-white outline-none" />
                  ) : (
                    <span className="pl-[3px]">{value}</span>
                  )}
                </td>
                <td className="border-r border-b border-[#dcdcdc] p-0">
                  {extra !== null && (
                    <span className="flex justify-center"><Check label={name + "附加"} checked={extra} /></span>
                  )}
                </td>
              </tr>
            ))}
          </tbody>
        </table>
        <div className="flex w-[15px] shrink-0 justify-center pt-[14px] pb-[35px]">
          <div className="w-2 rounded-full bg-[#c8c8c8]" />
        </div>
      </div>
      <div className="flex shrink-0 gap-[6px] py-px">
        {["图例", "实体模型", "提属性"].map((t) => (
          <button key={t} type="button" className="h-[26px] w-20 rounded-[4px] border border-[#c8c8c8] bg-white pt-[2px]">{t}</button>
        ))}
      </div>
    </section>
  );
}

function Handle({ side }) {
  return (
    <div className="flex w-1 shrink-0 items-center bg-white">
      <div className="flex h-[100px] w-1 items-center justify-center bg-[#5b6472]">
        <svg viewBox="0 0 4 8" className="h-2 w-1"><path d={side === "left" ? "M4 0v8L0 4z" : "M0 0v8l4-4z"} fill="#c8ccd2" /></svg>
      </div>
    </div>
  );
}

function Canvas() {
  return (
    <main className="relative min-w-0 flex-1 overflow-hidden bg-black">
      <svg viewBox="558 169 991 840" preserveAspectRatio="xMidYMid slice" className="absolute inset-0 h-full w-full" fill="none">
        <g stroke="#6a6a6a">
          <path d="M558 310.500h354M558 631.500h354" />
          <path d="M671 404.500L833 414q8 1 8.500 9v95q-.500 8-8.500 9l-162 9.500q-2 0-4-1.500L630 510q-5-5-8-12-4.500-12-4.500-28t4.500-28q3-7 8-11l37-25q2-1.500 4-1.500z" />
          <path d="M622 442l-5 7-4 21 4 22 5 6" />
          <path d="M669.500 436.500H810q8 1 8.500 8V496q-.500 7-8.500 7.500H669.500Q646.500 494 646.500 470t23-33.500z" />
          <circle cx="803" cy="470" r="8.500" />
          <path d="M558 508l6 7-6 7" />
        </g>
        <path d="M912.500 169V828M984.500 828V203.500H1549" stroke="#c4c4c4" />
        <path d="M841.500 1009V827.500h214V1009" fill="#808080" stroke="#d0d0d0" />
        <path d="M558 952.500h283M1056 952.500h493" stroke="#fff" />
        <path d="M1092 539.500h228M1374 539.500h71l-53.500 71.500V505M1463 539.500h86M1423 809.500h126" stroke="#d80000" />
        <path d="M984.500 486v214.500h107V486" stroke="#00c4c4" fill="#000" />
        <path d="M984 486h108" stroke="#009898" strokeWidth="2" />
        <g fill="#ff00ff" fontFamily="Lato" fontWeight="100" fontSize="70" textAnchor="middle">
          <text transform="translate(1012 553) rotate(90)">R</text>
          <text transform="translate(1012 593) rotate(90)">Q</text>
          <text transform="translate(1012 633) rotate(90)">F</text>
        </g>
        <rect x="888" y="401" width="286" height="363" rx="1" stroke="#ff1e10" strokeWidth="3" />
        <text x="1504" y="525" fill="#fff" fontFamily="'Noto Sans CJK SC'" fontWeight="100" fontSize="44">燃</text>
        <path d="M1549 492l-4 11 2 5" stroke="#fff" />
        <circle cx="1092.500" cy="909.500" r="19.500" stroke="#ff8000" />
        <path d="M1092 909.500h54M1146 867.500h249.500v85" stroke="#c86400" />
        <path d="M1146 867v85.500h249.500z" fill="#ff8000" />
        <g stroke="#7a72e0">
          <path d="M1280.500 809.500h142v143h-142z" />
          <path d="M1309.500 838A42.500 43 0 0 0 1394.500 838M1351.500 881.500V934M1316 916.500h71" />
        </g>
        <path d="M607.500 955v-22" stroke="#00d000" strokeWidth="3" />
        <path d="M607.500 929l5 9h-10z" fill="#00d000" />
        <path d="M610 959.500h20" stroke="#f00000" strokeWidth="4" />
        <path d="M638 959.500l-10-4.500v9z" fill="#f00000" />
        <circle cx="607.500" cy="959.500" r="5.500" fill="#0000c0" />
        <text x="603" y="929" fill="#00e000" fontFamily="Liberation Sans" fontSize="14">Y</text>
        <text x="639" y="965" fill="#f00000" fontFamily="Liberation Sans" fontSize="14">X</text>
        <circle cx="1484.500" cy="906" r="20" fill="#1a73e8" />
        <path d="M1484.500 898l2.700 5 5.600 1-4 4.200.800 5.800-5.100-2.300-5.100 2.300.800-5.800-4-4.200 5.600-1z" fill="#fff" stroke="#fff" strokeWidth="3" strokeLinejoin="round" />
      </svg>
      <div className="absolute top-px right-0 flex w-[33px] flex-col items-center rounded-b-[3px] border border-[#d8d8d8] bg-white pt-3 pr-[2px] pb-3">
        <button type="button" aria-label="动态观察"><Icon name="orbit" className="size-5" /></button>
        <button type="button" className="relative mt-2" aria-label="三维">
          <Icon name="cube3d" className="size-5" />
          <span className="absolute bottom-[2px] left-[2px] text-[8px] leading-2 font-bold text-[#1a73e8]">3D</span>
        </button>
        <button type="button" aria-label="视图" className="mt-2 flex flex-col items-center gap-[9px]"><Icon name="cube" className="size-5" /><Caret className="text-[#444]" /></button>
        <button type="button" aria-label="着色" className="mt-[6px] flex flex-col items-center gap-[9px]"><Icon name="cubeblue" className="size-5" /><Caret className="text-[#444]" /></button>
        <button type="button" aria-label="旋转" className="mt-[7px] flex flex-col items-center gap-2"><Icon name="rotate" className="size-5" /><Caret className="text-[#444]" /></button>
        <div className="mt-[5px] h-px w-[23px] bg-[#666]" />
        <button type="button" aria-label="显示列表" className="mt-[6px]"><Icon name="listeye" className="size-5" /></button>
      </div>
      <div className="absolute inset-x-0 bottom-0 flex h-[27px] items-center justify-center gap-1 bg-[#373737]/72 font-bold whitespace-nowrap text-white">
        <Icon name="shrink" />
        左键点选或拉框选择图例和文字（可不选），右键确认或ESC退出
      </div>
    </main>
  );
}

function DisplayPanel() {
  return (
    <aside className="flex w-[195px] shrink-0 flex-col overflow-hidden bg-white">
      <div className="h-3 shrink-0 border-y border-l border-[#d4d4d4] bg-[#e6e6e6]" />
      <div className="h-[22px] shrink-0 border-b border-[#dcdcdc] bg-[#f0f0f0] pl-[9px] leading-[22px] text-[#707070]">显示设置</div>
      <div className="flex h-[27px] shrink-0 items-end gap-[3px] border-b border-[#c0c4ca] pl-[3px] whitespace-nowrap" role="tablist">
        <button type="button" role="tab" className="-mb-px h-6 rounded-t-[4px] border border-b-0 border-[#c0c4ca] bg-white px-[6px] text-[#1a73e8]">楼层显示</button>
        <button type="button" role="tab" className="h-[21px] rounded-t-[4px] bg-[#dcdcdc] px-[6px] text-[#555]">分层显示</button>
        <button type="button" role="tab" className="h-[21px] rounded-t-[4px] bg-[#dcdcdc] px-[6px] text-[#555]">图元显示</button>
      </div>
      <div className="flex h-[30px] shrink-0 items-center border-b border-[#c0c4ca] pl-2 whitespace-nowrap text-black">
        {["当前楼层", "相邻楼层"].map((t, i) => (
          <label key={t} className="flex w-[90px] shrink-0 items-center gap-[7px]">
            <input type="radio" name="floor" defaultChecked={i === 0} className="size-[14px] appearance-none rounded-full border border-[#666] bg-white checked:bg-[radial-gradient(circle,#1a73e8_3px,white_4px)]" />
            {t}
          </label>
        ))}
        <input type="radio" name="floor" aria-label="自定义楼层" className="size-[14px] shrink-0 appearance-none rounded-full border border-[#666] bg-white" />
      </div>
      <ul className="min-h-0 flex-1 border-b border-l-2 border-[#c0c4ca] pt-[3px] text-[#777]">
        <li className="flex h-6 items-center">
          <Caret className="ml-[10px] text-[#888]" />
          <label className="ml-[7px] flex items-center gap-[7px]"><Check disabled partial />全部楼层</label>
        </li>
        {["屋面层", "第3层", "第2层", "首层", "基础层"].map((t) => (
          <li key={t} className="flex h-6 items-center pl-11">
            <label className="flex items-center gap-[7px]"><Check disabled checked={t === "首层"} />{t}</label>
          </li>
        ))}
      </ul>
      <label className="flex h-[39px] shrink-0 items-center gap-[3px] border-b border-l border-[#c0c4ca] pt-px pl-px whitespace-nowrap">
        <Check />其他单项工程图元亮显
      </label>
    </aside>
  );
}

function StatusButton({ icon, caret, active }) {
  return (
    <button
      type="button"
      aria-label={icon}
      className={
        "flex h-[26px] shrink-0 items-start justify-between rounded-[3px] border px-1 pt-1 " +
        (caret ? "w-9" : "w-[25px]") +
        (active ? " border-[#2a7de1] bg-[#d6e8fd]" : " border-[#909090] bg-white")
      }
    >
      <Icon name={icon} />
      {caret && <svg viewBox="0 0 8 5" className="mt-[6px] h-1 w-[5px] shrink-0"><path d="M0 0h8L4 5z" fill="#444" /></svg>}
    </button>
  );
}

function StatusBar() {
  return (
    <footer className="flex h-6 shrink-0 items-start overflow-hidden bg-[#fbfbfb] pt-[3px] pl-[2px] leading-[25px] whitespace-nowrap">
      <span className="w-[120px] shrink-0">层高：5.4</span>
      <span className="w-[140px] shrink-0">底标高：0</span>
      <span className="w-[110px] shrink-0">选中图元：0</span>
      <span className="w-[110px] shrink-0">隐藏图元：0</span>
      <div className="flex gap-[3px]">
        <StatusButton icon="sFind" />
        <StatusButton icon="sCorner" />
        <StatusButton icon="sRect" caret active />
        <StatusButton icon="sCube" caret />
        <StatusButton icon="sX" />
        <StatusButton icon="sAngle" caret />
        <StatusButton icon="sPlus" caret />
        <StatusButton icon="sSel" active />
        <StatusButton icon="sCurve" />
      </div>
      <span className="w-[119px] shrink-0 pl-[6px]">CAD图亮度：100%</span>
      <StatusButton icon="minus" />
      <input
        type="range"
        aria-label="CAD图亮度"
        defaultValue="100"
        className="mt-1 h-4 w-[45px] appearance-none bg-[linear-gradient(#c4c4c4,#c4c4c4)] bg-[length:100%_2px] bg-center bg-no-repeat [&::-webkit-slider-thumb]:h-[18px] [&::-webkit-slider-thumb]:w-[9px] [&::-webkit-slider-thumb]:appearance-none [&::-webkit-slider-thumb]:rounded-[3px] [&::-webkit-slider-thumb]:border [&::-webkit-slider-thumb]:border-[#555] [&::-webkit-slider-thumb]:bg-[#f4f4f4]"
      />
      <StatusButton icon="plus" />
    </footer>
  );
}

export default function App() {
  return (
    <div className="flex h-screen flex-col overflow-hidden bg-white font-['Open_Sans','Noto_Sans_CJK_SC',sans-serif] text-[12px] leading-4 text-[#333]">
      <Header />
      <Ribbon />
      <FilterBar />
      <div className="flex min-h-0 flex-1">
        <NavPanel />
        <div className="ml-1 flex w-[347px] shrink-0 flex-col">
          <ComponentPanel />
          <PropertyPanel />
        </div>
        <Handle side="left" />
        <Canvas />
        <Handle side="right" />
        <DisplayPanel />
      </div>
      <StatusBar />
    </div>
  );
}
